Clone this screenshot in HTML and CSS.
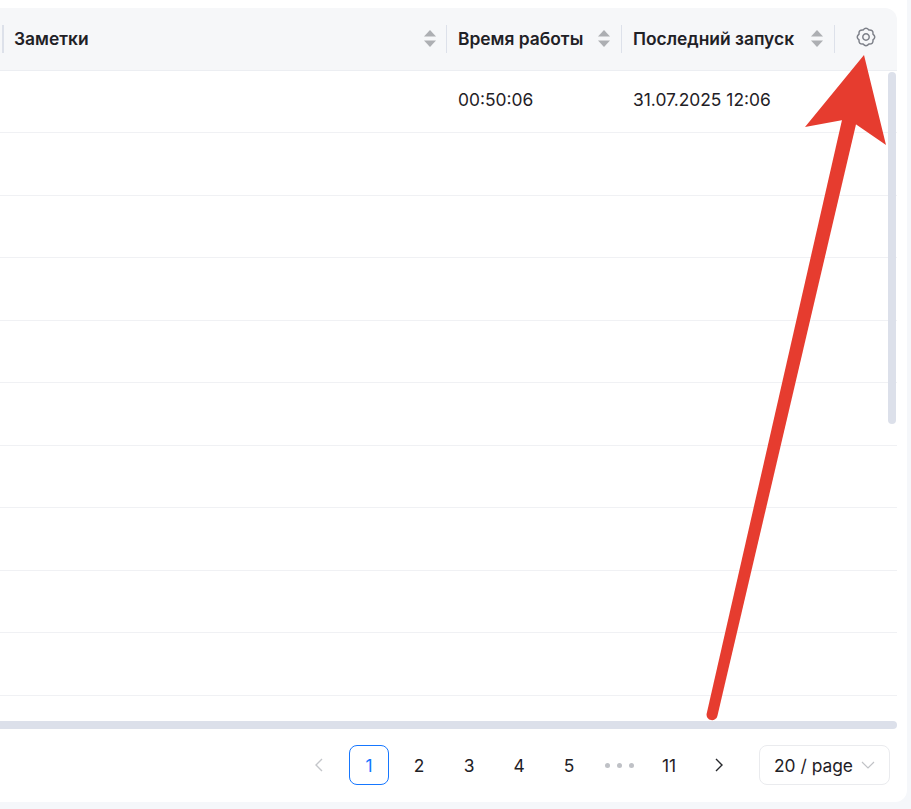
FILE: index.html
```html
<!DOCTYPE html>
<html lang="ru">
<head>
<meta charset="utf-8">
<title>Таблица</title>
<link rel="stylesheet" href="styles.css">
</head>
<body>
<main class="card">
  <section class="table">
    <div class="row head">
      <div class="cell"><span>Заметки</span>
        <svg class="sort" viewBox="0 0 12 18"><path d="M6 0 12 6.5H0Z"/><path d="M0 10.5H12L6 17Z"/></svg></div>
      <div class="cell"><span>Время работы</span>
        <svg class="sort" viewBox="0 0 12 18"><path d="M6 0 12 6.5H0Z"/><path d="M0 10.5H12L6 17Z"/></svg></div>
      <div class="cell"><span>Последний запуск</span>
        <svg class="sort" viewBox="0 0 12 18"><path d="M6 0 12 6.5H0Z"/><path d="M0 10.5H12L6 17Z"/></svg></div>
      <div class="cell gear-cell">
        <svg class="gear" viewBox="-10 -10 20 20"><path d="M7.02 -2.91Q10.5 0 7.02 2.91Q7.42 7.42 2.91 7.02Q0 10.5 -2.91 7.02Q-7.42 7.42 -7.02 2.91Q-10.5 0 -7.02 -2.91Q-7.42 -7.42 -2.91 -7.02Q0 -10.5 2.91 -7.02Q7.42 -7.42 7.02 -2.91Z"/><circle r="3.2"/></svg>
      </div>
    </div>
    <div class="row"><div class="td"></div><div class="td">00:50:06</div><div class="td">31.07.2025 12:06</div><div class="td"></div></div>
    <div class="row"></div>
    <div class="row"></div>
    <div class="row"></div>
    <div class="row"></div>
    <div class="row"></div>
    <div class="row"></div>
    <div class="row"></div>
    <div class="row"></div>
    <div class="row"></div>
    <div class="vbar"></div>
    <div class="hbar"></div>
  </section>
  <nav class="pager">
    <span class="pg nav off"><svg viewBox="0 0 12 16"><path d="M9 2 3 8 9 14"/></svg></span>
    <span class="pg active">1</span>
    <span class="pg">2</span>
    <span class="pg">3</span>
    <span class="pg">4</span>
    <span class="pg">5</span>
    <span class="pg dots"><i></i><i></i><i></i></span>
    <span class="pg">11</span>
    <span class="pg nav"><svg viewBox="0 0 12 16"><path d="M3 2 9 8 3 14"/></svg></span>
    <span class="select">20 / page<svg viewBox="0 0 14 8"><path d="M1 1 7 7 13 1"/></svg></span>
  </nav>
</main>
<svg class="arrow" viewBox="0 0 911 809">
  <path class="head-tip" d="M706.6 714 842 120 857 120 717.4 716A5.5 5.5 0 0 1 706.6 714Z"/>
  <path class="head-tip" d="M864 55 886 145 854 123 843 120 805 127Z"/>
</svg>
</body>
</html>
```

FILE: styles.css
```css
* { box-sizing: border-box; }
html, body { margin: 0; height: 100%; }
body {
  background: #f5f7fa;
  font-family: Inter, "Noto Sans", sans-serif;
  font-size: 17.4px;
  color: #1f2126;
  overflow: hidden;
}
.card {
  width: 907px;
  height: 802px;
  background: #fff;
  border-bottom-right-radius: 12px;
  padding: 8px 10px 0 0;
}
.table {
  position: relative;
  padding-bottom: 33.5px;
}
.row {
  display: grid;
  grid-template-columns: 446px 175px 213px 63px;
  height: 62.5px;
  border-bottom: 1px solid #f0f1f4;
}
.td {
  padding-left: 12px;
  line-height: 58px;
}
.head {
  background: #f6f7f9;
  border-top-right-radius: 12px;
  border-bottom-color: #eceef2;
  font-weight: 600;
}
.cell {
  position: relative;
  display: flex;
  align-items: center;
  justify-content: space-between;
  padding: 0 11px 1px 12px;
}
.cell:first-child { padding: 0 10px 1px 14px; }
.cell::before {
  content: "";
  position: absolute;
  left: 0;
  top: 17px;
  height: 28px;
  width: 1px;
  background: #dde1ea;
}
.cell:first-child::before { left: 2px; width: 2px; }
.gear-cell { justify-content: center; padding: 0 0 3px; }
.sort { width: 12px; height: 18px; margin-top: 1px; fill: #adafb3; }
.gear {
  width: 20px;
  height: 20px;
  fill: none;
  stroke: #7d8089;
  stroke-width: 1.5;
}
.vbar {
  position: absolute;
  top: 64px;
  right: 1px;
  width: 8px;
  height: 352px;
  border-radius: 4px;
  background: #dce0ea;
}
.hbar {
  position: absolute;
  left: 0;
  bottom: 0;
  width: 897px;
  height: 8px;
  border-radius: 0 4px 4px 0;
  background: #dce0ea;
}
.pager {
  display: flex;
  justify-content: flex-end;
  align-items: center;
  gap: 10px;
  padding: 16px 17px 0 0;
  margin-right: -10px;
}
.pg {
  width: 40px;
  height: 40px;
  display: flex;
  align-items: center;
  justify-content: center;
  border-radius: 8px;
}
.active {
  border: 1px solid #1677ff;
  color: #1677ff;
}
.nav svg {
  width: 12px;
  height: 16px;
  fill: none;
  stroke: #26282c;
  stroke-width: 1.4;
}
.off svg { stroke: #c4c6ca; }
.dots { gap: 7px; }
.dots i {
  width: 5px;
  height: 5px;
  border-radius: 50%;
  background: #bfc1c6;
}
.select {
  width: 131px;
  height: 40px;
  margin-left: 10px;
  display: flex;
  align-items: center;
  justify-content: space-between;
  padding: 0 14px;
  border: 1px solid #eaebee;
  border-radius: 8px;
}
.select svg {
  width: 14px;
  height: 8px;
  fill: none;
  stroke: #c0c2c6;
  stroke-width: 1.2;
}
.arrow {
  position: absolute;
  left: 0;
  top: 0;
  width: 911px;
  height: 809px;
  pointer-events: none;
}
.head-tip { fill: #e63c2f; }
```
